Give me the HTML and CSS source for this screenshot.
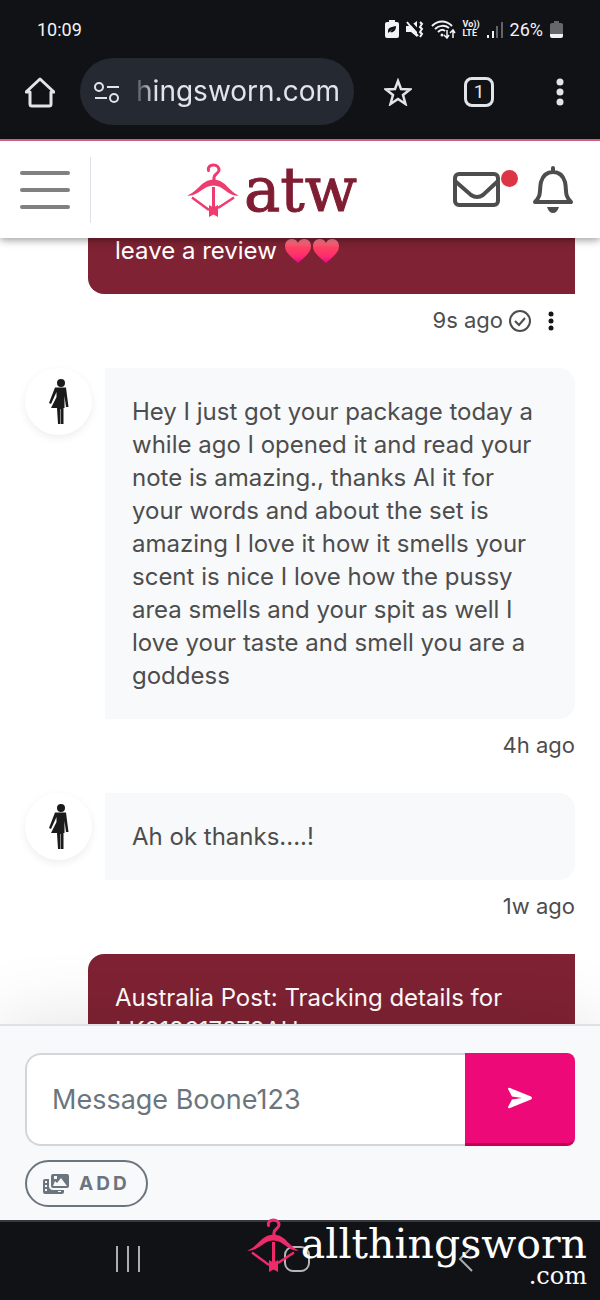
FILE: index.html
```html
<!DOCTYPE html>
<html lang="en">
<head>
    <meta charset="UTF-8">
    <meta name="viewport" content="width=device-width, initial-scale=1.0">
    <title>Messages</title>
    <link rel="stylesheet" href="styles.css">
</head>
<body>

    <!-- Shared shapes -->
    <svg class="shapes" width="0" height="0" aria-hidden="true">
        <defs>
            <linearGradient id="heart-fill" x1="0" y1="0" x2="0" y2="1">
                <stop offset="0" stop-color="#ff8795"/>
                <stop offset="0.35" stop-color="#ff4364"/>
                <stop offset="0.75" stop-color="#fd2a6c"/>
                <stop offset="1" stop-color="#e500a4"/>
            </linearGradient>
            <symbol id="heart" viewBox="0 0 26 24">
                <path fill="url(#heart-fill)" d="M13 24C9 20 0 14.500 0 7.300C0 3 2.800 0 6.700 0C9.700 0 11.900 1.400 13 4C14.100 1.400 16.300 0 19.300 0C23.200 0 26 3 26 7.300C26 14.500 17 20 13 24Z"/>
            </symbol>
            <symbol id="bow" viewBox="0 0 52 54">
                <path d="M21.500 7.500C20.500 4.500 23 2 26.500 2C30 2 32 4.500 32 7C32 10.500 27 11 27 14.500V18" fill="none" stroke="currentColor" stroke-width="3" stroke-linecap="round"/>
                <path d="M0 32.500C11 29 14 17 26.500 16.500C39 17 42 29 52 32.500C41 34 37 22.500 26.500 22.500C16 22.500 11 34 0 32.500Z" fill="currentColor"/>
                <path d="M5 34.500L22 47M47 34.500L31 45" fill="none" stroke="currentColor" stroke-width="2.500"/>
                <path d="M26.500 24V46" stroke="currentColor" stroke-width="3"/>
                <path d="M22 42L26.500 44.500L31 42V54L26.500 51.500L22 54Z" fill="currentColor"/>
            </symbol>
            <symbol id="person" viewBox="0 0 20 46">
                <circle cx="12" cy="4" r="4"/>
                <path d="M6 8.500H17L19.500 28H17L15.500 17V29H14.500V45H12V30H11.500V45H9L8 29H2L7.500 18V13L2 25L0 24Z"/>
            </symbol>
        </defs>
    </svg>

    <!-- Phone status -->
    <div class="status-bar">
        <span class="clock">10:09</span>
        <div class="status-icons">
            <svg width="14" height="18" viewBox="0 0 14 18">
                <path fill="#f2f2f4" d="M4 2V0H10V2H12Q14 2 14 4V16Q14 18 12 18H2Q0 18 0 16V4Q0 2 2 2Z"/>
                <path fill="#111216" d="M3 11C3 7 7 7 11 6C11 11 8 13 5 12L8 9L3 13Z"/>
            </svg>
            <svg width="18" height="18" viewBox="0 0 18 18" fill="none" stroke="#f2f2f4">
                <path fill="#f2f2f4" stroke="none" d="M0 6H4L11 1V17L5 12H0Z"/>
                <path stroke="#111216" stroke-width="3" d="M3 1L15 14"/>
                <path stroke-width="2" d="M1 2L12 16M14 2L16 4L14 7L16 9L14 12L16 14L14 17"/>
            </svg>
            <svg width="25" height="19" viewBox="0 0 25 19" fill="none" stroke="#f2f2f4" stroke-width="2">
                <path d="M1 6C7 0 15 0 21 6M4 9C8 5 14 5 18 8M7 12C10 9 12 9 14 11"/>
                <circle cx="11" cy="15" r="1.500" fill="#f2f2f4" stroke="none"/>
                <path d="M16 10V18M13 15L16 18L18 15M22 18V10M19 13L22 10L24 13" stroke-width="1.500"/>
            </svg>
            <span class="volte"><span>Vo))</span><span>LTE</span></span>
            <svg width="16" height="17" viewBox="0 0 16 17" stroke-width="2">
                <path stroke="#f2f2f4" d="M1 17V14M6 17V10"/>
                <path stroke="#626368" d="M10 17V5M15 17V1"/>
            </svg>
            <span class="percent">26%</span>
            <svg width="13" height="17" viewBox="0 0 13 17">
                <path fill="#66676b" d="M4 2V0H9V2H11Q13 2 13 4V13H0V4Q0 2 2 2Z"/>
                <path fill="#f2f2f4" d="M0 13H13V15Q13 17 11 17H2Q0 17 0 15Z"/>
            </svg>
        </div>
    </div>

    <!-- Browser toolbar -->
    <div class="browser-bar">
        <button class="browser-button" aria-label="Home">
            <svg width="30" height="32" viewBox="0 0 30 32" fill="none" stroke="#e3e4ea" stroke-width="3" stroke-linejoin="round">
                <path d="M1 16H5V28Q5 30 7 30H24Q26 30 26 28V16H29L15 3Z"/>
            </svg>
        </button>
        <div class="address">
            <svg width="26" height="22" viewBox="0 0 26 22" fill="none" stroke="#e3e4ea" stroke-width="2">
                <circle cx="5" cy="6" r="4"/>
                <path d="M13 6H25M1 17H13"/>
                <circle cx="20" cy="17" r="4"/>
            </svg>
            <span class="url">hingsworn.com</span>
        </div>
        <div class="browser-actions">
            <button class="browser-button" aria-label="Bookmark">
                <svg width="28" height="28" viewBox="0 0 28 28" fill="none" stroke="#e3e4ea" stroke-width="2.500">
                    <path d="M14 3L17 11L26 11.500L19 17L21.500 26L14 21L6.500 26L9 17L2 11.500L11 11Z"/>
                </svg>
            </button>
            <button class="browser-button" aria-label="Tabs"><span class="tab-count">1</span></button>
            <button class="browser-button" aria-label="Browser menu">
                <svg width="8" height="28" viewBox="0 0 8 28" fill="#e3e4ea">
                    <circle cx="4" cy="4" r="3.500"/>
                    <circle cx="4" cy="14" r="3.500"/>
                    <circle cx="4" cy="24" r="3.500"/>
                </svg>
            </button>
        </div>
    </div>

    <!-- Site header -->
    <header class="site-header">
        <button class="menu-button" aria-label="Menu">
            <span></span>
            <span></span>
            <span></span>
        </button>
        <a class="logo" href="#">
            <svg width="52" height="54"><use href="#bow"/></svg>
            <span>atw</span>
        </a>
        <div class="header-links">
            <a class="mail" href="#" aria-label="Messages">
                <svg width="48" height="36" viewBox="0 0 48 36" fill="none" stroke="#4d4d4d" stroke-width="4">
                    <rect x="2" y="2" width="43" height="31" rx="4"/>
                    <path d="M2 9L18 23Q24 27 30 23L45 9"/>
                </svg>
                <span class="unread"></span>
            </a>
            <a class="bell" href="#" aria-label="Notifications">
                <svg width="42" height="48" viewBox="0 0 42 48">
                    <path d="M21 2V6M3 36C10 29 7 25 9 16C11 9 15 6 21 6C27 6 31 9 33 16C35 25 32 29 39 36Z" fill="none" stroke="#4d4d4d" stroke-width="4" stroke-linecap="round" stroke-linejoin="round"/>
                    <path d="M15 41H27Q25 47 21 47Q17 47 15 41Z" fill="#4d4d4d"/>
                </svg>
            </a>
        </div>
    </header>

    <!-- Conversation -->
    <main class="chat">
        <div class="message sent clipped">
            <p class="bubble">leave a review <svg class="heart" width="26" height="24"><use href="#heart"/></svg><svg class="heart" width="26" height="24"><use href="#heart"/></svg></p>
            <div class="meta">
                <span>9s ago</span>
                <svg width="22" height="22" viewBox="0 0 22 22" fill="none" stroke="#4d4d4d" stroke-width="2">
                    <circle cx="11" cy="11" r="10"/>
                    <path d="M6 11L10 15L16 8"/>
                </svg>
                <button class="more" aria-label="Message options">
                    <svg width="6" height="20" viewBox="0 0 6 20" fill="#151515">
                        <circle cx="3" cy="3" r="2.500"/>
                        <circle cx="3" cy="10" r="2.500"/>
                        <circle cx="3" cy="17" r="2.500"/>
                    </svg>
                </button>
            </div>
        </div>

        <div class="message received">
            <div class="avatar"><svg width="20" height="46"><use href="#person"/></svg></div>
            <p class="bubble">Hey I just got your package today a while ago I opened it and read your note is amazing., thanks Al it for your words and about the set is amazing I love it how it smells your scent is nice I love how the pussy area smells and your spit as well I love your taste and smell you are a goddess</p>
            <div class="meta"><span>4h ago</span></div>
        </div>

        <div class="message received">
            <div class="avatar"><svg width="20" height="46"><use href="#person"/></svg></div>
            <p class="bubble">Ah ok thanks....!</p>
            <div class="meta"><span>1w ago</span></div>
        </div>

        <div class="message sent">
            <p class="bubble">Australia Post: Tracking details for LK218617078AU</p>
        </div>
    </main>

    <!-- Message form -->
    <form class="composer">
        <div class="input-row">
            <textarea rows="1" aria-label="Message" placeholder="Message Boone123"></textarea>
            <button class="send" type="button" aria-label="Send">
                <svg width="26" height="22" viewBox="0 0 26 22" fill="#fff">
                    <path d="M1 2Q1 0 3 1L24 9.500Q26 11 24 12.500L3 21Q1 22 1 20L5 12.500L15 11L5 9.500Z"/>
                </svg>
            </button>
        </div>
        <button class="add" type="button">
            <svg width="26" height="20" viewBox="0 0 26 20">
                <path fill="#6c757d" fill-rule="evenodd" d="M10 0H24Q26 0 26 2V12Q26 14 24 14H10Q8 14 8 12V2Q8 0 10 0ZM10 12H24L18 4L14 9L12 7ZM11 2V5H14V2Z"/>
                <path fill="#6c757d" fill-rule="evenodd" d="M2 5H6V13Q7 16 10 16H21V18Q21 20 19 20H2Q0 20 0 18V7Q0 5 2 5ZM2 7V9H4V7ZM2 11V13H4V11ZM2 15V17H4V15ZM15 17V18H18V17Z"/>
            </svg>
            <span>ADD</span>
        </button>
    </form>

    <!-- Phone navigation -->
    <div class="phone-nav">
        <button aria-label="Recent apps">
            <svg width="26" height="26" viewBox="0 0 26 26" stroke="#acaeb2" stroke-width="2">
                <path d="M2 0V26M13 0V26M24 0V26"/>
            </svg>
        </button>
        <button aria-label="Home screen">
            <svg width="28" height="28" viewBox="0 0 28 28" fill="none" stroke="#b5b6ba" stroke-width="2">
                <rect x="2" y="2" width="24" height="24" rx="8"/>
            </svg>
        </button>
        <button aria-label="Back">
            <svg width="16" height="28" viewBox="0 0 16 28" fill="none" stroke="#acaeb2" stroke-width="2">
                <path d="M14 2L2 14L14 26"/>
            </svg>
        </button>
        <div class="watermark">
            <svg width="52" height="54"><use href="#bow"/></svg>
            <div class="watermark-text">
                <div class="watermark-name">allthingsworn</div>
                <div class="watermark-domain">.com</div>
            </div>
        </div>
    </div>

</body>
</html>
```
FILE: styles.css
```css
* {
    box-sizing: border-box;
}

body {
    margin: 0;
    height: 100vh;
    display: flex;
    flex-direction: column;
    overflow: hidden;
    font-family: Inter, sans-serif;
    font-size: 24px;
    line-height: 33px;
    color: #4d4d4d;
    background-color: #fff;
}

button {
    padding: 0;
    border: none;
    background: none;
    font-family: inherit;
    cursor: pointer;
}

svg {
    display: block;
    flex-shrink: 0;
}

.shapes {
    position: absolute;
}

/* Phone status */
.status-bar {
    display: flex;
    justify-content: space-between;
    align-items: center;
    flex-shrink: 0;
    height: 58px;
    padding: 0 37px;
    color: #f2f2f4;
    background-color: #111216;
    font-family: Roboto, sans-serif;
    font-size: 18px;
}

.status-icons {
    display: flex;
    align-items: center;
    gap: 7px;
}

.volte {
    display: flex;
    flex-direction: column;
    font-size: 9px;
    font-weight: bold;
    line-height: 9px;
}

/* Browser toolbar */
.browser-bar {
    display: flex;
    align-items: center;
    flex-shrink: 0;
    padding: 0 20px 14px;
    background-color: #111216;
}

.browser-button {
    display: flex;
    justify-content: center;
    align-items: center;
    flex-shrink: 0;
    width: 40px;
    height: 40px;
}

.address {
    display: flex;
    flex: 1;
    align-items: center;
    justify-content: space-between;
    min-width: 0;
    height: 67px;
    margin: 0 24px 0 20px;
    padding: 0 14px;
    border-radius: 34px;
    color: #e3e4ea;
    background-color: #252931;
    font-size: 28px;
}

.url {
    mask-image: linear-gradient(to right, rgba(0, 0, 0, 0.2), #000 20px);
}

.browser-actions {
    display: flex;
    gap: 41px;
}

.tab-count {
    width: 30px;
    height: 30px;
    border: 3px solid #e3e4ea;
    border-radius: 8px;
    color: #e3e4ea;
    font-family: Roboto, sans-serif;
    font-size: 19px;
    line-height: 24px;
}

/* Site header */
.site-header {
    position: relative;
    z-index: 2;
    display: flex;
    justify-content: space-between;
    align-items: center;
    flex-shrink: 0;
    height: 99px;
    padding: 0 26px 0 0;
    border-top: 2px solid #d0607f;
    background-color: #fff;
    box-shadow: 0 2px 8px rgba(0, 0, 0, 0.4);
}

.menu-button {
    display: flex;
    flex-direction: column;
    justify-content: center;
    gap: 13px;
    width: 91px;
    height: 66px;
    padding-left: 20px;
    border-right: 1px solid #dee2e6;
}

.menu-button span {
    width: 50px;
    height: 4px;
    border-radius: 2px;
    background-color: #808080;
}

.logo {
    display: flex;
    align-items: center;
    gap: 5px;
    color: #ee3b70;
    text-decoration: none;
}

.logo span {
    color: #7f1e33;
    font-family: "DejaVu Serif", serif;
    font-size: 61px;
    line-height: 66px;
    -webkit-text-stroke: 1px #7f1e33;
}

.header-links {
    display: flex;
    align-items: center;
    gap: 31px;
}

.mail {
    position: relative;
}

.unread {
    position: absolute;
    top: -2px;
    right: -17px;
    width: 17px;
    height: 17px;
    border-radius: 50%;
    background-color: #dc3545;
}

/* Conversation */
.chat {
    flex: 1;
    min-height: 0;
    margin-top: -4px;
    padding: 0 25px;
    overflow: hidden;
}

.message {
    display: grid;
    grid-template-columns: 67px 1fr;
    column-gap: 13px;
}

.message.sent {
    grid-template-columns: 1fr;
    padding-left: 63px;
}

.bubble {
    margin: 0;
    padding: 27px;
    border-radius: 0 16px 16px 0;
    background-color: #f8f9fb;
}

.sent .bubble {
    border-radius: 16px 0 0 16px;
    color: #fff;
    background-color: #7f2233;
}

.clipped .bubble {
    padding-top: 0;
    border-top-left-radius: 0;
}

.heart {
    display: inline-block;
    margin: 0 1px;
    vertical-align: -4px;
}

.avatar {
    display: flex;
    justify-content: center;
    align-items: center;
    width: 67px;
    height: 67px;
    border-radius: 50%;
    background-color: #fff;
    box-shadow: 0 3px 8px rgba(0, 0, 0, 0.07);
    fill: #1b1b1b;
}

.meta {
    grid-column: 1 / -1;
    display: flex;
    justify-content: flex-end;
    align-items: center;
    gap: 6px;
    padding: 10px 0 31px;
    font-size: 22px;
}

.more {
    display: flex;
    justify-content: center;
    width: 20px;
    margin: 0 14px 0 4px;
}

/* Message form */
.composer {
    position: relative;
    z-index: 1;
    flex-shrink: 0;
    padding: 27px 25px 13px;
    border-top: 2px solid #dee2e6;
    background-color: #f8f9fb;
    box-shadow: 0 0 80px rgba(0, 0, 0, 0.12);
}

.input-row {
    display: flex;
    height: 93px;
    margin-bottom: 14px;
}

.input-row textarea {
    flex: 1;
    min-width: 0;
    padding: 28px 25px;
    border: 2px solid #d3d6d9;
    border-right: none;
    border-radius: 16px 0 0 16px;
    background-color: #fff;
    font-family: inherit;
    font-size: 27px;
    line-height: 33px;
    overflow: hidden;
    resize: none;
}

.input-row textarea::placeholder {
    color: #6c757d;
}

.send {
    display: flex;
    justify-content: center;
    align-items: center;
    width: 110px;
    border-bottom: 3px solid #c4004f;
    border-radius: 0 8px 8px 0;
    background-color: #ee0979;
}

.add {
    display: flex;
    align-items: center;
    gap: 10px;
    height: 47px;
    padding: 0 16px;
    border: 2px solid #6c757d;
    border-radius: 24px;
    color: #6c757d;
    font-size: 19px;
    font-weight: bold;
    letter-spacing: 3px;
}

/* Phone navigation */
.phone-nav {
    position: relative;
    z-index: 2;
    display: grid;
    grid-template-columns: repeat(3, 1fr);
    flex-shrink: 0;
    height: 80px;
    padding: 0 50px 4px 44px;
    border-top: 2px solid #36383e;
    background-color: #111216;
}

.phone-nav button {
    display: flex;
    justify-content: center;
    align-items: center;
}

.watermark {
    position: absolute;
    top: -4px;
    right: 13px;
    display: flex;
    gap: 2px;
    color: #ee2a6b;
}

.watermark-text {
    padding-top: 4px;
    color: #fff;
    font-family: "DejaVu Serif", serif;
    text-align: right;
}

.watermark-name {
    font-size: 41px;
    line-height: 44px;
}

.watermark-domain {
    font-size: 24px;
    line-height: 20px;
}
```
